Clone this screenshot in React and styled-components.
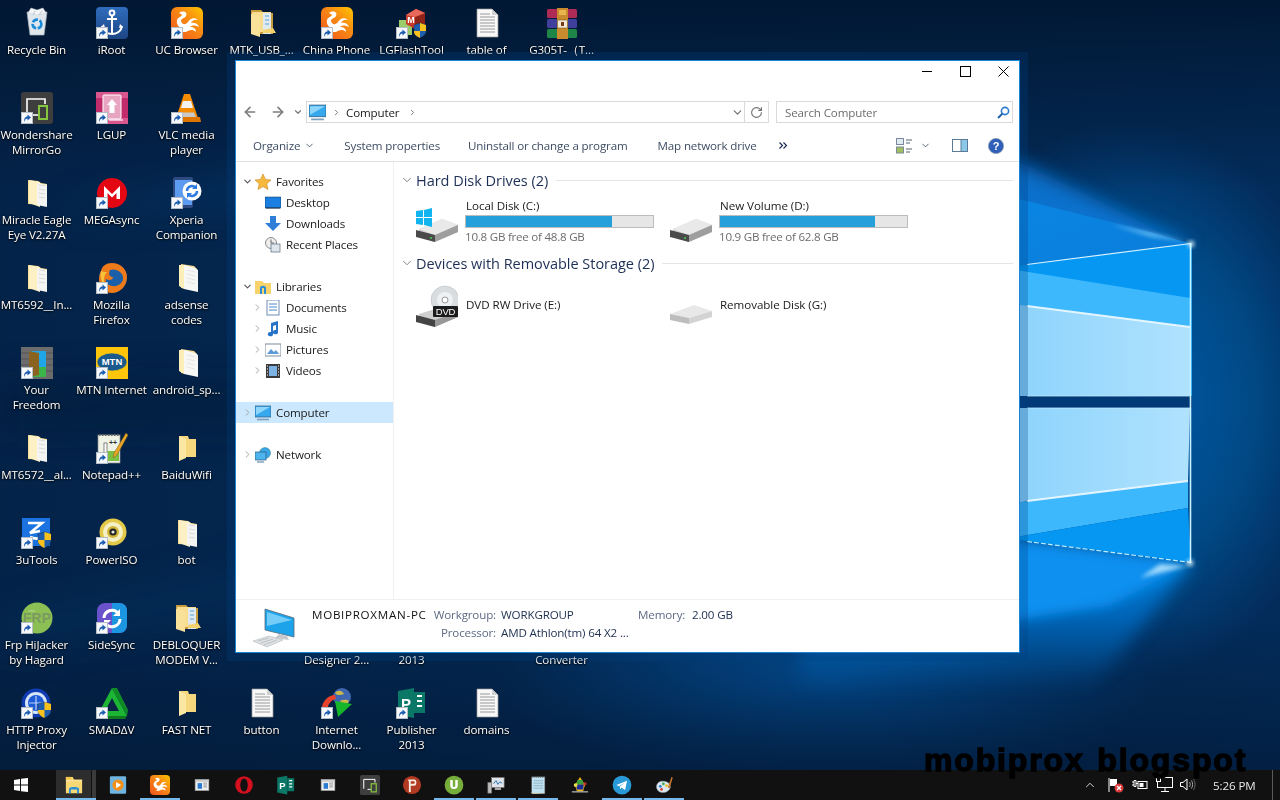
import React from 'react';
import styled, { createGlobalStyle } from 'styled-components';
import { ArrowLeft, ArrowRight, ChevronDown, ChevronRight, RotateCw, ChevronUp } from 'lucide-react';

const UI = '"Open Sans","Noto Sans","Liberation Sans",sans-serif';

const Global = createGlobalStyle`
  html,body{margin:0;padding:0;background:#04244a;overflow:hidden;}
  #root{width:1280px;height:800px;}
  *{box-sizing:border-box;}
`;

const Screen = styled.div`position:relative;width:1280px;height:800px;overflow:hidden;display:flex;flex-direction:column;font-family:${UI};`;
const WallpaperSvg = styled.svg`position:absolute;inset:0;width:1280px;height:800px;`;
const DesktopGrid = styled.div`position:relative;flex:1;display:grid;grid-template-columns:repeat(8,75px);grid-auto-rows:85px;align-content:start;margin-left:-1px;`;
const DeskItem = styled.div`display:flex;flex-direction:column;align-items:center;padding-top:7px;min-width:0;`;
const IconBox = styled.div`position:relative;width:32px;height:32px;flex:none;`;
const IconSvg = styled.svg`display:block;width:${p => p.$s || 32}px;height:${p => p.$s || 32}px;`;
const Badge = styled.svg`position:absolute;left:0;bottom:0;width:12px;height:12px;`;
const DeskLabel = styled.div`margin-top:3px;width:75px;text-align:center;color:#fff;font-size:11.6px;line-height:15.4px;letter-spacing:-.12px;text-shadow:0 1px 2px #000,0 0 2px rgba(0,0,0,.8);white-space:pre-line;`;

const Window = styled.div`position:absolute;left:235px;top:60px;width:785px;height:593px;background:#fff;border:1px solid #1a84d6;box-shadow:0 0 0 8px rgba(0,64,130,.28);display:flex;flex-direction:column;color:#000;font-size:11.6px;letter-spacing:-.15px;`;
const TitleBar = styled.div`height:40px;flex:none;display:flex;justify-content:flex-end;gap:8px;padding-right:1px;`;
const CtrlBtn = styled.div`width:30px;height:20px;display:flex;align-items:center;justify-content:center;`;
const NavRow = styled.div`height:22px;flex:none;display:flex;align-items:center;`;
const NavArrows = styled.div`width:70px;flex:none;display:flex;align-items:center;padding-left:6px;`;
const NavSlot = styled.div`width:${p => p.$w}px;flex:none;display:flex;justify-content:center;align-items:center;color:${p => p.$c || '#7c7c7c'};`;
const AddressBox = styled.div`width:463px;height:22px;border:1px solid #d9d9d9;display:flex;align-items:center;flex:none;color:#1a1a1a;`;
const Crumb = styled.span`margin:0 4px 0 -1px;`;
const CrumbChev = styled.span`display:flex;color:#777;margin:0 6px 0 5px;`;
const Spacer = styled.div`flex:1;`;
const AddrBtn = styled.div`height:100%;width:${p => p.$w}px;display:flex;align-items:center;justify-content:center;color:#707070;border-left:${p => p.$div ? '1px solid #d9d9d9' : '0'};`;
const SearchBox = styled.div`margin-left:7px;width:237px;height:22px;border:1px solid #d9d9d9;display:flex;align-items:center;padding:0 2px 0 8px;color:#6d6d6d;justify-content:space-between;flex:none;`;
const Toolbar = styled.div`height:31px;margin-top:8px;flex:none;border-bottom:1px solid #e3e3e3;display:flex;align-items:center;color:#3d4d63;padding:0 15px 1px 17px;`;
const ToolItem = styled.div`display:flex;align-items:center;gap:4px;margin-left:${p => p.$ml || 0}px;white-space:nowrap;`;
const Body = styled.div`flex:1;display:flex;min-height:0;`;
const Side = styled.div`width:158px;flex:none;border-right:1px solid #f0f0f0;padding-top:9px;display:flex;flex-direction:column;`;
const TreeRow = styled.div`height:21px;flex:none;display:flex;align-items:center;padding-left:${p => 5 + (p.$lvl || 0) * 10}px;margin-top:${p => p.$gap ? 21 : 0}px;background:${p => p.$sel ? '#cce8ff' : 'transparent'};width:157px;color:#1a1a1a;`;
const Exp = styled.div`width:12px;height:12px;flex:none;display:flex;align-items:center;justify-content:center;color:${p => p.$open ? '#555' : '#a0a0a0'};margin-right:2px;`;
const TreeIcon = styled.div`width:16px;height:16px;flex:none;margin-right:5px;`;
const Main = styled.div`flex:1;padding:7px 6px 0 6px;min-width:0;`;
const GroupHead = styled.div`height:22px;display:flex;align-items:center;color:#1e2f55;font-size:14.5px;letter-spacing:-.03px;margin-top:${p => p.$mt || 0}px;`;
const GroupChev = styled.div`width:16px;display:flex;justify-content:flex-start;color:#6b6b6b;`;
const GroupLine = styled.div`flex:1;height:1px;background:#e5e5e5;margin-left:8px;`;
const Tiles = styled.div`display:grid;grid-template-columns:254px 254px;margin:${p => p.$mt || 0}px 0 0 16px;`;
const Tile = styled.div`display:flex;align-items:center;min-height:${p => p.$h || 47}px;`;
const TileIcon = styled.div`width:49px;flex:none;margin-top:${p => p.$mt || 0}px;`;
const TileInfo = styled.div`flex:1;min-width:0;`;
const TileName = styled.div`line-height:15px;color:#1a1a1a;padding-left:1px;letter-spacing:-.05px;margin-top:${p => p.$mt || 0}px;`;
const Bar = styled.div`width:189px;height:13px;margin-top:2px;border:1px solid #bcbcbc;background:#e6e6e6;`;
const BarFill = styled.div`height:100%;background:#26a0da;`;
const TileSub = styled.div`line-height:16px;margin-top:1px;color:#6d6d6d;letter-spacing:-.25px;`;
const Details = styled.div`height:53px;flex:none;border-top:1px solid #f0f0f0;display:flex;padding:7px 0 0 17px;`;
const DetailIcon = styled.div`width:59px;flex:none;`;
const DetailGrid = styled.div`display:grid;grid-template-columns:121px 63px 142px 49px auto;grid-auto-rows:18px;line-height:16px;`;
const DName = styled.div`color:#111;white-space:nowrap;letter-spacing:.72px;`;
const DLabel = styled.div`color:#5e6a85;text-align:${p => p.$left ? 'left' : 'right'};white-space:nowrap;`;
const DValue = styled.div`color:#1e2f4f;padding-left:5px;white-space:nowrap;`;

const Watermark = styled.div`position:absolute;left:924px;top:740px;font-family:"Liberation Sans",sans-serif;font-weight:700;font-size:32px;line-height:40px;letter-spacing:1.85px;color:#000;-webkit-text-stroke:1.4px #000;word-spacing:2px;white-space:nowrap;`;

const Taskbar = styled.div`position:relative;height:30px;flex:none;background:#111;display:flex;align-items:stretch;`;
const StartBtn = styled.div`width:48px;display:flex;align-items:center;justify-content:center;margin-right:8px;padding-right:7px;`;
const TaskBtn = styled.div`position:relative;width:40px;margin-right:2px;display:flex;align-items:center;justify-content:center;padding:2px ${p => p.$act ? 5 : 0}px 0 0;background:${p => p.$act ? 'linear-gradient(90deg,#2d2d2d 0 35px,#111 35px 36px,#3a3a3a 36px)' : 'transparent'};border-bottom:2px solid ${p => p.$on ? '#76b9ed' : 'transparent'};`;
const TraySlot = styled.div`position:absolute;left:${p => p.$x}px;top:${p => p.$y || 7}px;display:flex;`;
const Clock = styled.div`position:absolute;left:1213px;top:8px;line-height:16px;color:#e8e8e8;font-size:11.6px;letter-spacing:-.1px;white-space:nowrap;`;
const ShowDesktop = styled.div`position:absolute;left:1272px;top:0;width:1px;height:30px;background:#5a5a5a;`;

function Wallpaper() {
  return (
    <WallpaperSvg viewBox="0 0 1280 800">
      <defs>
        <linearGradient id="wBase" x1="0" x2="1" y1="0" y2="0">
          <stop offset="0" stopColor="#042349" /><stop offset=".5" stopColor="#032852" /><stop offset=".8" stopColor="#032a56" /><stop offset="1" stopColor="#032c5a" />
        </linearGradient>
        <linearGradient id="wTop" x1="0" x2="0" y1="0" y2="1">
          <stop offset="0" stopColor="#011630" stopOpacity=".9" /><stop offset="1" stopColor="#011630" stopOpacity="0" />
        </linearGradient>
        <linearGradient id="wBot" x1="0" x2="0" y1="0" y2="1">
          <stop offset="0" stopColor="#021834" stopOpacity="0" /><stop offset="1" stopColor="#021834" stopOpacity=".75" />
        </linearGradient>
        <radialGradient id="wGlow"><stop offset="0" stopColor="#005cb0" stopOpacity="1" /><stop offset=".6" stopColor="#00508f" stopOpacity=".8" /><stop offset="1" stopColor="#004a90" stopOpacity="0" /></radialGradient>
        <radialGradient id="wGlow2"><stop offset="0" stopColor="#0358a6" stopOpacity=".85" /><stop offset="1" stopColor="#0358a6" stopOpacity="0" /></radialGradient>
        <linearGradient id="p3" x1="0" x2="1" y1="0" y2="0"><stop offset="0" stopColor="#72c8fb" /><stop offset="1" stopColor="#b0e2fe" /></linearGradient>
        <linearGradient id="upBeam" x1="0" x2="1" y1="0" y2="1"><stop offset="0" stopColor="#0a8aea" /><stop offset="1" stopColor="#0a7cd8" /></linearGradient>
        <linearGradient id="lowBeam" x1="0" x2="0" y1="0" y2="1"><stop offset="0" stopColor="#0090f2" /><stop offset=".5" stopColor="#0068bc" /><stop offset="1" stopColor="#0068bc" stopOpacity="0" /></linearGradient>
        <linearGradient id="topBeam" x1="0" x2="0" y1="0" y2="1"><stop offset="0" stopColor="#0568b8" stopOpacity="0" /><stop offset=".6" stopColor="#0560b0" stopOpacity=".7" /><stop offset="1" stopColor="#0a88e6" /></linearGradient>
        <filter id="b2" x="-50%" y="-50%" width="200%" height="200%"><feGaussianBlur stdDeviation="2" /></filter>
        <filter id="b5" x="-30%" y="-30%" width="160%" height="160%"><feGaussianBlur stdDeviation="6" /></filter>
        <filter id="b8" x="-30%" y="-30%" width="160%" height="160%"><feGaussianBlur stdDeviation="9" /></filter>
        <filter id="b20" x="-30%" y="-50%" width="160%" height="200%"><feGaussianBlur stdDeviation="20" /></filter>
      </defs>
      <rect width="1280" height="800" fill="url(#wBase)" />
      <ellipse cx="1130" cy="400" rx="210" ry="280" fill="url(#wGlow)" />
      <ellipse cx="830" cy="680" rx="330" ry="110" fill="url(#wGlow2)" />
      <rect width="1280" height="190" fill="url(#wTop)" />
      <rect y="620" width="1280" height="180" fill="url(#wBot)" />
      <g filter="url(#b20)" opacity=".55">
        <path d="M0 385 L1000 395 V412 L0 430Z" fill="#011a38" />
        <path d="M40 215 L240 180 L600 130 L600 150 L240 205Z" fill="#0a4a86" opacity=".7" />
        <path d="M0 620 L300 560 L300 590 L0 650Z" fill="#063a70" opacity=".6" />
      </g>
      <path d="M800 110 L1192 244 L800 300Z" fill="url(#topBeam)" filter="url(#b8)" />
      <path d="M880 130 L1027 165 L1170 236 L1192 244 L880 260Z" fill="#0878d8" opacity=".85" filter="url(#b8)" />
      <path d="M800 530 L1192 563 L1090 690 L800 690Z" fill="url(#lowBeam)" filter="url(#b8)" />
      <path d="M880 164 L1027 201 L1150 232 L1192 244 L880 284Z" fill="url(#upBeam)" />
      <path d="M880 522 L1191 563 L1110 606 L880 640Z" fill="#0890f0" filter="url(#b5)" />
      <path d="M880 284 L1192 243 V396 H880Z" fill="#0597f2" />
      <path d="M880 248 L1190 298 V396 H880Z" fill="#3db8fc" />
      <path d="M880 287 L1190 327 V396 H880Z" fill="url(#p3)" />
      <path d="M880 408 H1190 L1188 481 L880 520Z" fill="url(#p3)" />
      <path d="M880 520 L1188 481 V508 L880 560Z" fill="#3db8fc" />
      <path d="M880 523 L1027 541 L1191 562 L1188 508 L880 560Z" fill="#0597f2" />
      <path d="M880 396 H1192 V408 H880Z" fill="#023a78" />
      <path d="M1027 264.5 L1191 243.5" stroke="#d8f4ff" strokeWidth="1.2" fill="none" />
      <path d="M1027 306 L1190 327" stroke="#eefaff" strokeWidth="2.2" fill="none" opacity=".9" />
      <path d="M1027 501 L1188 481" stroke="#f2fbff" strokeWidth="2" fill="none" opacity=".9" />
      <path d="M1027 541.5 L1191 562.5" stroke="#b8ecff" strokeWidth="1.2" strokeDasharray="5 2" fill="none" />
      <path d="M1190.5 244 V563" stroke="#c8f2ff" strokeWidth="1.6" fill="none" />
      <path d="M1027 396 H1190 M1027 408 H1190" stroke="#bfeaff" strokeWidth="1" fill="none" opacity=".8" />
      <path d="M1110 224 L1190 242 L1150 236Z" fill="#a8e4ff" opacity=".8" filter="url(#b2)" />
      <path d="M1140 578 L1188 566 L1160 564Z" fill="#d0f2ff" opacity=".75" filter="url(#b2)" />
      <circle cx="1191" cy="244" r="3" fill="#eaf9ff" filter="url(#b2)" />
      <circle cx="1190" cy="563" r="3" fill="#eaf9ff" filter="url(#b2)" />
    </WallpaperSvg>
  );
}

const Txt = ({ x, y, s, c = '#fff', w = 700, children, a = 'middle', f = 'Liberation Sans' }) => (
  <text x={x} y={y} fontSize={s} fill={c} fontWeight={w} textAnchor={a} fontFamily={f}>{children}</text>
);

const docFolder = (
  <>
    <path d="M7 3 L17 4 L20 6 L26 7 V28 L7 27Z" fill="#f7dc8f" />
    <path d="M8 3 L19 5 V30 L8 26Z" fill="#fdf0c4" />
    <path d="M16 6 L26 8 V30 L16 28Z" fill="#f4f4f2" />
    <path d="M18 8 L24 9 M18 12 L24 13 M18 16 L24 17 M18 20 L24 21" stroke="#d9d9d9" strokeWidth="1" />
  </>
);
const plainDocFolder = (
  <>
    <path d="M10 2 L23 4 L26 7 V28 L10 26Z" fill="#f7dc8f" />
    <path d="M13 3 L24 6 L27 8 V30 L13 27Z" fill="#f7f7f5" />
    <path d="M8 3 L13 3 V27 L8 24Z" fill="#fdeeb8" />
    <path d="M16 8 L24 10 M16 12 L24 14 M16 16 L24 18 M16 20 L24 22" stroke="#e4e4e4" strokeWidth="1" />
  </>
);
const simpleFolder = (
  <>
    <path d="M8 4 H17 L18 7 H25 V25 H12 L8 29Z" fill="#f6d77e" />
    <path d="M8 4 L15 7 V26 L8 29Z" fill="#fbe6a2" />
  </>
);
const richFolder = (
  <>
    <path d="M5 3 H15 L18 6 H27 V27 H5Z" fill="#c99b3f" />
    <path d="M6 5 H25 V25 H6Z" fill="#f8dd91" />
    <path d="M17 6 H25 V27 H17Z" fill="#dfe9ef" />
    <path d="M19 9 H23 M19 13 H23 M19 17 H23" stroke="#5a9fd8" strokeWidth="1.2" />
    <path d="M5 7 L14 9 V30 L5 27Z" fill="#f9e19a" />
    <path d="M27 21 L30 26 H17 L17 23Z" fill="#f4d36f" />
  </>
);
const textDoc = (
  <>
    <path d="M6 2 H21 L27 8 V30 H6Z" fill="#f8f8f8" stroke="#9a9a9a" strokeWidth=".7" />
    <path d="M21 2 V8 H27Z" fill="#d0d0d0" />
    <path d="M9 7 H19 M9 10 H24 M9 13 H24 M9 16 H24 M9 19 H24 M9 22 H24 M9 25 H24" stroke="#8e8e8e" strokeWidth=".9" />
  </>
);
const ucArt = (
  <>
    <rect width="32" height="32" rx="6" fill="url(#ucg)" />
    <defs><linearGradient id="ucg" x1="0" x2="1" y1="1" y2="0"><stop offset="0" stopColor="#f0541e" /><stop offset=".6" stopColor="#f98c12" /><stop offset="1" stopColor="#fdc500" /></linearGradient></defs>
    <path d="M8 6 C12 3 17 5 15 9 C13 12 10 11 10 14 C11 18 15 18 17 15 C19 11 24 10 27 13 C23 12 21 14 20 16 C24 15 27 17 28 20 C24 18 21 18 19 20 C23 20 25 22 25 25 C22 22 18 23 15 25 H9 C11 24 12 23 12 22 C8 21 5 17 6 13 C7 10 10 10 11 8 C11 7 9 7 8 6Z" fill="#fff" />
  </>
);
const wordWin = (
  <>
    <rect x="5" y="7" width="22" height="18" fill="#eee" stroke="#9b9b9b" />
    <rect x="6" y="8" width="20" height="3" fill="#cfcfcf" />
    <rect x="9" y="13" width="7" height="9" fill="#2a7bd0" />
    <path d="M18 13 H24 M18 16 H24 M18 19 H24" stroke="#666" strokeWidth="1" />
  </>
);
const pubArt = (
  <>
    <path d="M2 4 L18 1 V31 L2 28Z" fill="#0b7766" />
    <path d="M18 5 H29 V26 H18Z" fill="#0b7766" />
    <path d="M21 9 H26 M21 14 H26 M21 19 H26" stroke="#fff" strokeWidth="2" />
    <Txt x="10" y="22" s="15">P</Txt>
  </>
);
const mirrorArt = (
  <>
    <rect width="32" height="32" rx="3" fill="#3e3e3e" />
    <path d="M6 22 V7 H24 V12" fill="none" stroke="#fff" strokeWidth="1.6" />
    <rect x="18" y="14" width="8" height="13" fill="none" stroke="#85c441" strokeWidth="2" />
    <path d="M12 23 H17" stroke="#fff" strokeWidth="1.6" />
  </>
);

const art = {
  recycle: (
    <>
      <path d="M6 5 H26 L23 28 H9Z" fill="#dfe6ec" stroke="#a8b4bd" strokeWidth=".7" />
      <path d="M7 6 L10 1 L16 3 L22 1 L25 6 L16 8Z" fill="#f2f5f7" stroke="#c4ccd2" strokeWidth=".5" />
      <path d="M12 8 L14 4 M18 8 L21 4" stroke="#b9c2c9" strokeWidth="1" />
      <circle cx="16" cy="17" r="4.4" fill="none" stroke="#1a8bd8" strokeWidth="2.6" strokeDasharray="6 1.6" />
    </>
  ),
  iroot: (
    <>
      <defs><linearGradient id="irg" x1="0" x2="0" y1="0" y2="1"><stop offset="0" stopColor="#2f6dbd" /><stop offset="1" stopColor="#1d4685" /></linearGradient></defs>
      <rect width="32" height="32" rx="4" fill="url(#irg)" />
      <g fill="none" stroke="#fff" strokeWidth="2">
        <circle cx="16" cy="6" r="2.4" /><path d="M16 8.5 V26 M11 12 H21 M6 19 C7 25 12 27 16 27 C20 27 25 25 26 19" />
      </g>
      <path d="M5 20 L8 17 L9 21Z M27 20 L24 17 L23 21Z" fill="#fff" />
    </>
  ),
  uc: ucArt,
  richFolder,
  docFolder,
  plainDocFolder,
  simpleFolder,
  lgflash: (
    <>
      <path d="M3 13 H16 V28 H3Z" fill="#9ccb6a" />
      <path d="M10 8 L20 2 L29 6 V17 L19 22 L10 17Z" fill="#c83b2c" />
      <path d="M19 10 L29 6 V17 L19 22Z" fill="#8e2418" />
      <path d="M10 8 L20 2 L29 6 L19 10Z" fill="#e8685a" />
      <Txt x="15" y="16" s="9">M</Txt>
      <path d="M18 18 L24 16 L30 18 V25 C30 28 26 30 24 31 C22 30 18 28 18 25Z" fill="#1d5fae" stroke="#223" strokeWidth=".4" />
      <path d="M24 16 L30 18 V24 H24Z M24 24 H18 V25 C18 28 22 30 24 31Z" fill="#f8c11d" />
    </>
  ),
  text: textDoc,
  rar: (
    <>
      <rect x="1" y="2" width="30" height="9" rx="1.5" fill="#b02a56" />
      <rect x="1" y="12" width="30" height="9" rx="1.5" fill="#3f3f9c" />
      <rect x="1" y="22" width="30" height="9" rx="1.5" fill="#1e8447" />
      <rect x="11" y="1" width="11" height="31" fill="#c98b2d" />
      <rect x="11.5" y="13" width="10" height="8" fill="#f2e9d8" stroke="#7a5518" strokeWidth=".6" />
      <path d="M13 3 H20 V8 H13Z" fill="#e8b64c" />
      <rect x="15" y="15" width="3" height="4" fill="#7a3a10" />
    </>
  ),
  mirror: mirrorArt,
  lgup: (
    <>
      <rect width="32" height="32" fill="#c22c6b" />
      <path d="M0 0 H32 V6 H0Z M0 26 H32 V32 H0Z" fill="#d9568e" />
      <rect x="7" y="3" width="18" height="24" rx="1" fill="#e7a5c2" stroke="#fff" strokeWidth="1" />
      <path d="M16 7 L21 13 H18.5 V21 H13.5 V13 H11Z" fill="#fff" />
      <path d="M13 28 H27" stroke="#fff" strokeWidth="1.2" />
    </>
  ),
  vlc: (
    <>
      <path d="M13 2 H19 L27 26 H5Z" fill="#f48b00" />
      <path d="M12 9 L20 9 L22 16 L10 16Z" fill="#f2f2f2" />
      <path d="M8.5 20.5 L23 20.5 L25 25 L7 25Z" fill="#c9c9c9" />
      <path d="M3 25 H29 L30 30 H2Z" fill="#e07400" />
    </>
  ),
  mega: (
    <>
      <circle cx="16" cy="16" r="15" fill="#e30613" />
      <path d="M8 22 V9 L16 17 L24 9 V22 H20.5 V16 L16 20.5 L11.5 16 V22Z" fill="#fff" />
    </>
  ),
  xperia: (
    <>
      <rect x="2" y="0" width="20" height="31" rx="2" fill="#2f4a80" />
      <rect x="4" y="3" width="17" height="25" fill="#5c9bf0" />
      <circle cx="21" cy="14" r="9.5" fill="#fff" />
      <path d="M16 14 A5 5 0 0 1 25 11 M26 14 A5 5 0 0 1 17 17" fill="none" stroke="#2e7be0" strokeWidth="2.4" />
      <path d="M26 7 V12 H21Z M16 21 V16 H21Z" fill="#2e7be0" />
    </>
  ),
  firefox: (
    <>
      <circle cx="17" cy="16" r="14" fill="#1c4f96" />
      <path d="M5 9 C6 4 10 1 16 1 C24 1 31 7 31 15 C31 24 24 31 16 31 C9 31 3 25 3 17 C3 14 4 11 5 9Z" fill="#ee7a1a" />
      <path d="M14 8 C20 6 27 10 27 16 C27 21 22 25 16 24 C11 23 9 20 10 17 C13 19 17 18 17 15 C14 15 12 13 14 8Z" fill="#1b5fa8" />
      <path d="M5 9 C4 14 5 20 9 24 C7 18 8 13 11 10 C9 10 7 10 5 9Z" fill="#f7c13a" />
    </>
  ),
  freedom: (
    <>
      <rect width="32" height="32" fill="#6c6c6c" />
      <path d="M0 6 H32 M0 12 H8 M24 12 H32 M0 18 H8 M24 18 H32 M0 24 H8 M24 24 H32" stroke="#4e4e4e" strokeWidth=".8" />
      <rect x="8" y="4" width="17" height="26" fill="#20a6e8" />
      <rect x="8" y="20" width="17" height="10" fill="#3bb54a" />
      <path d="M8 4 L18 6 V28 L8 30Z" fill="#8a6321" />
    </>
  ),
  mtn: (
    <>
      <rect width="32" height="32" fill="#fdc60a" />
      <ellipse cx="16" cy="15" rx="15" ry="9" fill="#1a5a8c" />
      <ellipse cx="16" cy="15" rx="15" ry="9" fill="none" stroke="#fdc60a" strokeWidth=".6" />
      <Txt x="16" y="18" s="9.5">MTN</Txt>
    </>
  ),
  notepad: (
    <>
      <rect x="2" y="3" width="22" height="28" fill="#eef3e6" stroke="#8a8a8a" strokeWidth=".7" />
      <path d="M3 3 H24" stroke="#666" strokeWidth="2" strokeDasharray="1.5 1.5" />
      <rect x="8" y="11" width="3" height="15" fill="#fff" stroke="#555" strokeWidth=".7" />
      <rect x="11" y="19" width="12" height="10" fill="#7ac143" />
      <Txt x="17" y="13" s="7" c="#333">++</Txt>
      <path d="M30 1 L32 3 L21 23 L17 26 L18 21Z" fill="#e8a628" stroke="#7a5a10" strokeWidth=".5" />
    </>
  ),
  utools: (
    <>
      <rect x="1" y="1" width="28" height="28" fill="#1a73e0" />
      <path d="M7 6 H21 L9 16 L19 14 M9 20 C13 22 18 22 22 20" fill="none" stroke="#fff" strokeWidth="2.6" />
      <path d="M17 17 L23.5 15 L30 17 V24 C30 27 26 30 23.5 31 C21 30 17 27 17 24Z" fill="#1d5fae" stroke="#223" strokeWidth=".4" />
      <path d="M23.5 15 L30 17 V23 H23.5Z M23.5 23 H17 V24 C17 27 21 30 23.5 31Z" fill="#f8c11d" />
    </>
  ),
  poweriso: (
    <>
      <circle cx="17" cy="15" r="13.5" fill="#e3c948" />
      <circle cx="17" cy="15" r="10" fill="#f4efc4" />
      <circle cx="17" cy="15" r="6" fill="#cfb53a" />
      <circle cx="17" cy="15" r="3.6" fill="#222" />
      <circle cx="17" cy="15" r="1.6" fill="#e7e7e7" />
    </>
  ),
  frp: (
    <>
      <circle cx="16" cy="16" r="15.5" fill="#8cbf54" />
      <Txt x="16" y="21" s="14" c="#7b9a60">FRP</Txt>
      <path d="M8 9 H14" stroke="#b8d993" strokeWidth="1" />
    </>
  ),
  sidesync: (
    <>
      <rect x="1" y="1" width="30" height="30" rx="8" fill="#6a52cc" />
      <path d="M16 1 H23 C28 1 31 4 31 9 V23 C31 28 28 31 23 31 H16Z" fill="#1c96e0" />
      <path d="M8 16 A8 8 0 0 1 22 11 M24 17 A8 8 0 0 1 10 22" fill="none" stroke="#fff" strokeWidth="3" />
      <path d="M24 7 V14 H17Z M8 25 V18 H15Z" fill="#fff" />
    </>
  ),
  proxy: (
    <>
      <circle cx="15" cy="16" r="14.5" fill="#0f3cb0" />
      <circle cx="15" cy="16" r="11" fill="#d7e5f8" />
      <circle cx="15" cy="16" r="8" fill="#1d5bd8" />
      <path d="M8 16 H22 M15 9 V23" stroke="#bcd3f5" strokeWidth="1.2" />
      <path d="M17 17 L23.5 15 L30 17 V24 C30 27 26 30 23.5 31 C21 30 17 27 17 24Z" fill="#1d5fae" stroke="#223" strokeWidth=".4" />
      <path d="M23.5 15 L30 17 V23 H23.5Z M23.5 23 H17 V24 C17 27 21 30 23.5 31Z" fill="#f8c11d" />
    </>
  ),
  smad: (
    <>
      <path d="M16 1 L31 29 H1Z" fill="#1db534" />
      <path d="M16 11 L23 24 H9Z" fill="#0b2445" />
      <path d="M16 1 L21 1 L32 23 L31 29Z" fill="#0f8c26" />
      <path d="M1 29 H31 L29 32 H4Z" fill="#0f7a20" />
    </>
  ),
  idm: (
    <>
      <circle cx="21" cy="10" r="9" fill="#3f66b0" />
      <path d="M14 6 C17 2 22 4 23 7 C20 8 16 9 14 6Z M19 14 C23 12 27 13 28 14 C26 18 22 19 19 14Z" fill="#c8b94a" />
      <path d="M1 20 C2 13 8 8 14 8 L15 12 C10 13 7 17 7 21Z" fill="#e8432a" />
      <path d="M1 20 C1 23 3 26 6 27 L8 22 L7 20Z" fill="#f4c21d" />
      <path d="M14 14 L31 17 L17 30Z" fill="#16b52a" />
    </>
  ),
  pubBig: pubArt,
  explorerTb: (
    <>
      <path d="M3 3 H14 L16 7 H29 V29 H3Z" fill="#f8d775" />
      <path d="M3 3 H12 V7 H3Z" fill="#f3c64c" />
      <path d="M8 22 C8 18 24 18 24 22 V29 H21 V23 H11 V29 H8Z" fill="#2a8fd8" />
      <path d="M3 9 H29" stroke="#fbe7ab" strokeWidth="1.4" />
    </>
  ),
  mediaTb: (
    <>
      <rect x="3" y="2" width="26" height="28" rx="2" fill="#6fb4e0" />
      <circle cx="16" cy="16" r="9" fill="#f39019" />
      <path d="M13 11 L21 16 L13 21Z" fill="#fff" />
    </>
  ),
  winTb: wordWin,
  operaTb: (
    <>
      <circle cx="16" cy="16" r="14" fill="#d4101f" />
      <ellipse cx="16" cy="16" rx="6" ry="10.5" fill="#111" />
    </>
  ),
  psiTb: (
    <>
      <circle cx="16" cy="16" r="14.5" fill="#b03a22" />
      <path d="M10 7 H20 C24 7 24 17 20 17 H14 V27 H11 V10 H10Z M14 10 V14 H19 C21 14 21 10 19 10Z" fill="#f6e9de" />
    </>
  ),
  utorrentTb: (
    <>
      <circle cx="16" cy="16" r="15" fill="#76ad3b" />
      <path d="M10 8 V17 C10 24 22 24 22 17 V8 H18 V17 C18 20 14 20 14 17 V8Z" fill="#fff" />
    </>
  ),
  monitorTb: (
    <>
      <rect x="9" y="4" width="20" height="16" fill="#e0e4e8" stroke="#777" />
      <path d="M12 14 L16 9 L19 15 L22 11 L26 13" fill="none" stroke="#1f6fb2" strokeWidth="1.4" />
      <rect x="3" y="12" width="6" height="17" fill="#bcbcbc" stroke="#777" />
      <path d="M14 20 H24 V24 H14Z" fill="#a8a8a8" />
    </>
  ),
  notesTb: (
    <>
      <rect x="6" y="3" width="21" height="27" fill="#bfe2f0" stroke="#6a6a6a" strokeWidth=".8" />
      <path d="M7 3 H26" stroke="#444" strokeWidth="2" strokeDasharray="1.5 1.5" />
      <path d="M9 9 H24 M9 13 H24 M9 17 H24 M9 21 H24" stroke="#7e9fae" />
      <path d="M4 28 L27 30 H8Z" fill="#dfd0a8" />
    </>
  ),
  colorTb: (
    <>
      <path d="M16 3 L24 16 L21 26 H11 L8 16Z" fill="#e8b41a" />
      <path d="M12 8 L20 8 L22 15 H10Z" fill="#3aa03a" />
      <path d="M10 15 H22 L21 23 H11Z" fill="#1b2a9a" />
      <circle cx="9" cy="16" r="3" fill="#e8e04a" /><circle cx="24" cy="14" r="2.5" fill="#c8322a" />
      <path d="M3 27 H29" stroke="#ddd" strokeWidth="1.6" />
    </>
  ),
  tgTb: (
    <>
      <circle cx="16" cy="16" r="15" fill="#2a9ad6" />
      <path d="M7 16 L24 9 L21 24 L15 20 L13 23 L12.5 18.5 L21 12 L11 17.8Z" fill="#fff" />
    </>
  ),
  paintTb: (
    <>
      <path d="M4 19 C4 12 10 9 16 10 C23 11 27 15 26 20 C25 25 19 29 12 28 C7 27 4 23 4 19Z" fill="#dbe6ee" stroke="#8ca0b0" strokeWidth=".7" />
      <circle cx="10" cy="18" r="2.2" fill="#2d7fd0" /><circle cx="15" cy="14" r="2.2" fill="#37a74a" /><circle cx="20" cy="17" r="2.2" fill="#e8c22a" /><circle cx="12" cy="23" r="2.2" fill="#d9432a" />
      <path d="M22 20 L28 3 L30 4 L25 21Z" fill="#c9772a" />
    </>
  ),
};

const Art = ({ name, s = 32 }) => <IconSvg $s={s} viewBox="0 0 32 32">{art[name]}</IconSvg>;

const ShortcutBadge = () => (
  <Badge viewBox="0 0 12 12">
    <rect x=".5" y=".5" width="11" height="11" fill="#f6f8fb" stroke="#b4bcc6" />
    <path d="M3 10 C3 6 4.5 4.5 6.5 4.5 V2.5 L10 5.5 L6.5 8.5 V6.5 C5 6.5 4 7.5 3 10Z" fill="#1c5cb0" />
  </Badge>
);

const rows = [
  [['Recycle Bin', 'recycle'], ['iRoot', 'iroot', 1], ['UC Browser', 'uc', 1], ['MTK_USB_...', 'richFolder'], ['China Phone', 'uc', 1], ['LGFlashTool', 'lgflash', 1], ['table of', 'text'], ['G305T-（T...', 'rar']],
  [['Wondershare\nMirrorGo', 'mirror', 1], ['LGUP', 'lgup', 1], ['VLC media\nplayer', 'vlc', 1], null, null, null, null, null],
  [['Miracle Eagle\nEye V2.27A', 'docFolder'], ['MEGAsync', 'mega', 1], ['Xperia\nCompanion', 'xperia', 1], null, null, null, null, null],
  [['MT6592__In...', 'docFolder'], ['Mozilla\nFirefox', 'firefox', 1], ['adsense\ncodes', 'plainDocFolder'], null, null, null, null, null],
  [['Your\nFreedom', 'freedom', 1], ['MTN Internet', 'mtn', 1], ['android_sp...', 'plainDocFolder'], null, null, null, null, null],
  [['MT6572__al...', 'docFolder'], ['Notepad++', 'notepad', 1], ['BaiduWifi', 'simpleFolder'], null, null, null, null, null],
  [['3uTools', 'utools', 1], ['PowerISO', 'poweriso', 1], ['bot', 'docFolder'], null, null, null, null, null],
  [['Frp HiJacker\nby Hagard', 'frp', 1], ['SideSync', 'sidesync', 1], ['DEBLOQUER\nMODEM V...', 'richFolder'], null, ['Advanced\nDesigner 2...', 'text'], ['Office\n2013', 'text'], null, ['Video\nConverter', 'text']],
  [['HTTP Proxy\nInjector', 'proxy', 1], ['SMADΔV', 'smad', 1], ['FAST NET', 'simpleFolder'], ['button', 'text'], ['Internet\nDownlo...', 'idm', 1], ['Publisher\n2013', 'pubBig', 1], ['domains', 'text'], null],
];

const taskItems = [
  ['explorerTb', 1, 1], ['mediaTb', 0], ['uc', 1], ['winTb', 0], ['operaTb', 0], ['pubBig', 0], ['winTb', 0], ['mirror', 0], ['psiTb', 0],
  ['utorrentTb', 1], ['monitorTb', 1], ['notesTb', 1], ['colorTb', 0], ['tgTb', 1], ['paintTb', 1],
];

const HDD = ({ win }) => (
  <IconSvg $s={42} viewBox="0 0 42 34">
    <path d="M3 21 L26 11 L42 17 V24 L18 34 L3 29Z" fill="#d3d3d3" />
    <path d="M3 21 L26 11 L42 17 L19 27Z" fill="#e9e9e9" />
    <path d="M0 22 L19 27 V34 L0 29Z" fill="#4a4a4a" />
    <path d="M19 27 L42 17 V24 L19 34Z" fill="#9e9e9e" />
    <circle cx="15" cy="30" r="1" fill="#47d04f" />
    {win && <path d="M0 3 L7 2 V9 H0Z M8 2 L16 0 V9 H8Z M0 10 H7 V17 L0 16Z M8 10 H16 V19 L8 17Z" fill="#11b4ee" />}
  </IconSvg>
);
const DVD = () => (
  <IconSvg $s={42} viewBox="0 0 42 42">
    <circle cx="29" cy="15" r="14" fill="#d9dde0" stroke="#aab" strokeWidth=".4" />
    <circle cx="29" cy="15" r="8" fill="#eef1f3" />
    <circle cx="29" cy="15" r="3" fill="#fff" stroke="#999" />
    <path d="M3 29 L25 22 L42 27 V32 L18 42 L3 37Z" fill="#cfcfcf" />
    <path d="M0 30 L19 35 V42 L0 37Z" fill="#444" />
    <path d="M19 35 L42 27 V32 L19 42Z" fill="#989898" />
    <rect x="17" y="21" width="25" height="11" rx="1" fill="#1c1c1c" />
    <Txt x="29.5" y="30" s="9.5" w={400}>DVD</Txt>
  </IconSvg>
);
const Removable = () => (
  <IconSvg $s={42} viewBox="0 0 42 20">
    <path d="M0 11 L24 2 L42 8 L19 15Z" fill="#e8e8e8" />
    <path d="M0 11 L19 15 V21 L0 17Z" fill="#bdbdbd" />
    <path d="M19 15 L42 8 V14 L19 21Z" fill="#d3d3d3" />
  </IconSvg>
);
const PcBig = () => (
  <IconSvg $s={42} viewBox="0 0 42 40">
    <path d="M12 1 L41 10 V29 L12 22Z" fill="#1ca3ea" stroke="#5a6a78" strokeWidth=".8" />
    <path d="M14 4 L39 12 L14 18Z" fill="#74cdf8" />
    <path d="M26 26 L34 28 L36 32 L22 30Z" fill="#c4c8cc" />
    <path d="M0 33 L16 28 L30 32 L14 39Z" fill="#dfe2e4" stroke="#b4b8bc" strokeWidth=".6" />
    <path d="M5 33 L16 30 M8 35 L20 31 M11 37 L24 32" stroke="#b5b9bd" strokeWidth=".8" />
  </IconSvg>
);

const tree = {
  star: <path d="M8 0 L10.5 5.4 L16 6 L11.8 9.8 L13 15.5 L8 12.6 L3 15.5 L4.2 9.8 L0 6 L5.5 5.4Z" fill="#f6b93e" stroke="#c98720" strokeWidth=".6" />,
  desktop: <><rect x="0" y="2" width="16" height="11" fill="#1a7fe0" stroke="#135" strokeWidth=".5" /><path d="M1 13 H15" stroke="#234" /></>,
  down: <path d="M5 0 H11 V7 H16 L8 15 L0 7 H5Z" fill="#2f7fd8" />,
  recent: <><circle cx="6" cy="6" r="5.5" fill="#eee" stroke="#8a8a8a" /><path d="M6 2.5 V6 H9" stroke="#666" fill="none" /><rect x="6" y="7" width="9" height="8" fill="#dfe6ee" stroke="#6a7a8a" strokeWidth=".8" /></>,
  lib: <><path d="M0 2 H7 L9 4 H16 V15 H0Z" fill="#f7d36a" /><path d="M5 15 V9 C5 6 11 6 11 9 V15 H9 V9 H7 V15Z" fill="#2a8fd8" /></>,
  doc: <><rect x="2" y="0" width="12" height="15" fill="#fff" stroke="#6f8cb4" /><path d="M4 4 H12 M4 7 H12 M4 10 H12" stroke="#4a86c8" /></>,
  music: <path d="M6 2 L13 0 V11 A2.6 2.2 0 1 1 11 9 V4 L8 5 V13 A2.6 2.2 0 1 1 6 11Z" fill="#2673c8" />,
  pic: <><rect x="0" y="2" width="16" height="12" fill="#fff" stroke="#7a8a9a" /><path d="M2 12 L6 7 L9 10 L11 8 L14 12Z" fill="#5a9ad8" /></>,
  video: <><rect x="1" y="1" width="14" height="14" fill="#3a3a3a" /><rect x="4" y="3" width="8" height="10" fill="#7cb3e4" /><path d="M2 3 H3 M2 6 H3 M2 9 H3 M2 12 H3 M13 3 H14 M13 6 H14 M13 9 H14 M13 12 H14" stroke="#fff" /></>,
  pc: <><rect x="0" y="1" width="16" height="11" fill="#36a9ee" stroke="#2b5a80" strokeWidth=".7" /><path d="M1 2 H15 L1 10Z" fill="#8ed6fb" /><path d="M2 14.5 H14" stroke="#7d9fba" strokeWidth="1.6" /></>,
  net: <><circle cx="10" cy="6" r="5.5" fill="#3aa8e8" stroke="#266" strokeWidth=".4" /><rect x="0" y="5" width="11" height="8" fill="#4db4ee" stroke="#2b5a80" strokeWidth=".7" /><path d="M2 15 H9" stroke="#7d9fba" strokeWidth="1.4" /></>,
};
const TI = ({ n }) => <TreeIcon><IconSvg $s={16} viewBox="0 0 16 16">{tree[n]}</IconSvg></TreeIcon>;

const treeRows = [
  { t: 'Favorites', i: 'star', open: 1 },
  { t: 'Desktop', i: 'desktop', lvl: 1 },
  { t: 'Downloads', i: 'down', lvl: 1 },
  { t: 'Recent Places', i: 'recent', lvl: 1 },
  { t: 'Libraries', i: 'lib', open: 1, gap: 1 },
  { t: 'Documents', i: 'doc', lvl: 1, closed: 1 },
  { t: 'Music', i: 'music', lvl: 1, closed: 1 },
  { t: 'Pictures', i: 'pic', lvl: 1, closed: 1 },
  { t: 'Videos', i: 'video', lvl: 1, closed: 1 },
  { t: 'Computer', i: 'pc', closed: 1, gap: 1, sel: 1 },
  { t: 'Network', i: 'net', closed: 1, gap: 1 },
];

const drives = [
  { name: 'Local Disk (C:)', free: 10.8, total: 48.8, win: true },
  { name: 'New Volume (D:)', free: 10.9, total: 62.8 },
];

function Explorer() {
  return (
    <Window>
      <TitleBar>
        <CtrlBtn><svg width="11" height="11" viewBox="0 0 11 11"><path d="M0 5.5 H10" stroke="#000" /></svg></CtrlBtn>
        <CtrlBtn><svg width="11" height="11" viewBox="0 0 11 11"><rect x=".5" y=".5" width="10" height="10" fill="none" stroke="#000" /></svg></CtrlBtn>
        <CtrlBtn><svg width="11" height="11" viewBox="0 0 11 11"><path d="M.5 .5 L10.5 10.5 M10.5 .5 L.5 10.5" stroke="#000" /></svg></CtrlBtn>
      </TitleBar>
      <NavRow>
        <NavArrows>
          <NavSlot $w={16}><ArrowLeft size={16} strokeWidth={2.4} /></NavSlot>
          <NavSlot $w={12} />
          <NavSlot $w={16}><ArrowRight size={16} strokeWidth={2.4} /></NavSlot>
          <NavSlot $w={7} />
          <NavSlot $w={10}><ChevronDown size={10} strokeWidth={3} /></NavSlot>
        </NavArrows>
        <AddressBox>
          <NavSlot $w={20}><IconSvg $s={17} viewBox="0 0 16 16">{tree.pc}</IconSvg></NavSlot>
          <CrumbChev><ChevronRight size={9} strokeWidth={2.5} /></CrumbChev>
          <Crumb>Computer</Crumb>
          <CrumbChev><ChevronRight size={9} strokeWidth={2.5} /></CrumbChev>
          <Spacer />
          <AddrBtn $w={13}><ChevronDown size={13} strokeWidth={2.2} /></AddrBtn>
          <AddrBtn $w={24} $div><RotateCw size={13} strokeWidth={2} /></AddrBtn>
        </AddressBox>
        <SearchBox>
          <span>Search Computer</span>
          <svg width="13" height="13" viewBox="0 0 13 13"><circle cx="8" cy="5" r="3.6" fill="none" stroke="#2a7ad0" strokeWidth="1.6" /><path d="M5.4 7.6 L1 12" stroke="#1d5fa8" strokeWidth="2" /></svg>
        </SearchBox>
      </NavRow>
      <Toolbar>
        <ToolItem>Organize <ChevronDown size={11} strokeWidth={1.8} /></ToolItem>
        <ToolItem $ml={29}>System properties</ToolItem>
        <ToolItem $ml={28}>Uninstall or change a program</ToolItem>
        <ToolItem $ml={30}>Map network drive</ToolItem>
        <ToolItem $ml={22}><svg width="9" height="7" viewBox="0 0 9 7"><path d="M.5 .5 L3.5 3.5 L.5 6.5 M4.5 .5 L7.5 3.5 L4.5 6.5" fill="none" stroke="#1e2f55" strokeWidth="1.2" /></svg></ToolItem>
        <Spacer />
        <ToolItem>
          <svg width="17" height="16" viewBox="0 0 17 16"><rect x=".5" y=".5" width="7" height="6" fill="#dfeaf3" stroke="#7a8a9a" /><rect x=".5" y="9" width="7" height="6" fill="#a0c060" stroke="#7a8a9a" /><path d="M10 2 H16 M10 5 H14 M10 11 H16 M10 14 H14" stroke="#506070" /></svg>
        </ToolItem>
        <ToolItem $ml={7}><ChevronDown size={11} strokeWidth={1.8} /></ToolItem>
        <ToolItem $ml={21}>
          <svg width="16" height="13" viewBox="0 0 16 13"><rect x=".5" y=".5" width="15" height="12" fill="#fff" stroke="#5b7a98" /><rect x="9" y="1" width="6" height="11" fill="#8cc8e8" /><path d="M9 1 V12" stroke="#5b7a98" /></svg>
        </ToolItem>
        <ToolItem $ml={20}>
          <svg width="16" height="16" viewBox="0 0 16 16"><circle cx="8" cy="8" r="7.6" fill="#2f5fb8" stroke="#8a9ab0" strokeWidth=".8" /><Txt x="8" y="12" s="11">?</Txt></svg>
        </ToolItem>
      </Toolbar>
      <Body>
        <Side>
          {treeRows.map(r => (
            <TreeRow key={r.t} $lvl={r.lvl} $gap={r.gap} $sel={r.sel}>
              <Exp $open={r.open}>
                {r.open && <ChevronDown size={11} strokeWidth={2.4} />}
                {r.closed && <ChevronRight size={11} strokeWidth={2} />}
              </Exp>
              <TI n={r.i} />
              {r.t}
            </TreeRow>
          ))}
        </Side>
        <Main>
          <GroupHead>
            <GroupChev><ChevronDown size={14} strokeWidth={1.4} /></GroupChev>Hard Disk Drives (2)<GroupLine />
          </GroupHead>
          <Tiles $mt={6}>
            {drives.map(d => (
              <Tile key={d.name}>
                <TileIcon $mt={7}><HDD win={d.win} /></TileIcon>
                <TileInfo>
                  <TileName>{d.name}</TileName>
                  <Bar><BarFill style={{ width: `${((d.total - d.free) / d.total) * 100}%` }} /></Bar>
                  <TileSub>{d.free} GB free of {d.total} GB</TileSub>
                </TileInfo>
              </Tile>
            ))}
          </Tiles>
          <GroupHead $mt={6}>
            <GroupChev><ChevronDown size={14} strokeWidth={1.4} /></GroupChev>Devices with Removable Storage (2)<GroupLine />
          </GroupHead>
          <Tiles $mt={4}>
            <Tile $h={43}><TileIcon><DVD /></TileIcon><TileInfo><TileName $mt={-3}>DVD RW Drive (E:)</TileName></TileInfo></Tile>
            <Tile $h={43}><TileIcon $mt={14}><Removable /></TileIcon><TileInfo><TileName $mt={-3}>Removable Disk (G:)</TileName></TileInfo></Tile>
          </Tiles>
        </Main>
      </Body>
      <Details>
        <DetailIcon><PcBig /></DetailIcon>
        <DetailGrid>
          <DName>MOBIPROXMAN-PC</DName>
          <DLabel>Workgroup:</DLabel>
          <DValue>WORKGROUP</DValue>
          <DLabel $left>Memory:</DLabel>
          <DValue>2.00 GB</DValue>
          <div />
          <DLabel>Processor:</DLabel>
          <DValue>AMD Athlon(tm) 64 X2 ...</DValue>
        </DetailGrid>
      </Details>
    </Window>
  );
}

function Bar2() {
  return (
    <Taskbar>
      <StartBtn>
        <svg width="14" height="14" viewBox="0 0 14 14"><path d="M0 2 L6 1 V6.5 H0Z M7 .8 L14 0 V6.5 H7Z M0 7.5 H6 V13 L0 12Z M7 7.5 H14 V14 L7 13.2Z" fill="#fff" /></svg>
      </StartBtn>
      {taskItems.map(([n, on, act], i) => (
        <TaskBtn key={i} $on={on} $act={act}><Art name={n} s={20} /></TaskBtn>
      ))}
      <TraySlot $x={1083} $y={8}><ChevronUp size={14} color="#fff" strokeWidth={1.4} /></TraySlot>
      <TraySlot $x={1108} $y={8}>
        <svg width="16" height="15" viewBox="0 0 16 15"><path d="M1 0 V14" stroke="#fff" /><path d="M2 1 H9 V8 H2Z" fill="#fff" /><circle cx="11" cy="10" r="4.5" fill="#d83a3a" /><path d="M9 8 L13 12 M13 8 L9 12" stroke="#fff" strokeWidth="1.3" /></svg>
      </TraySlot>
      <TraySlot $x={1132} $y={9}>
        <svg width="16" height="12" viewBox="0 0 16 12"><path d="M0 3 H2 M0 6 H2 M2 1.5 H4 V7.5 H2Z M4 4.5 H6" stroke="#fff" fill="none" /><rect x="6" y="2.5" width="9" height="7" fill="none" stroke="#fff" /><rect x="7.5" y="4" width="4" height="4" fill="#fff" /></svg>
      </TraySlot>
      <TraySlot $x={1156} $y={7}>
        <svg width="17" height="16" viewBox="0 0 17 16"><rect x="1.5" y=".5" width="15" height="10" fill="none" stroke="#fff" /><rect x=".5" y=".5" width="4" height="4" fill="#111" stroke="#fff" /><path d="M9 11 V14 M5 14.5 H13" stroke="#fff" /></svg>
      </TraySlot>
      <TraySlot $x={1180} $y={8}>
        <svg width="16" height="13" viewBox="0 0 16 13"><path d="M.5 4.5 H3 L7 1 V12 L3 8.5 H.5Z" fill="none" stroke="#fff" /><path d="M9.5 4 C10.5 5.5 10.5 7.5 9.5 9 M11.5 2.5 C13 5 13 8 11.5 10.5" fill="none" stroke="#aaa" /><path d="M13.5 1 C15.5 4.5 15.5 8.5 13.5 12" fill="none" stroke="#666" /></svg>
      </TraySlot>
      <Clock>5:26 PM</Clock>
      <ShowDesktop />
    </Taskbar>
  );
}

export default function App() {
  return (
    <Screen>
      <Global />
      <Wallpaper />
      <DesktopGrid>
        {rows.flat().map((c, i) => (
          <DeskItem key={i}>
            {c ? (
              <>
                <IconBox><Art name={c[1]} />{c[2] ? <ShortcutBadge /> : null}</IconBox>
                <DeskLabel>{c[0]}</DeskLabel>
              </>
            ) : null}
          </DeskItem>
        ))}
      </DesktopGrid>
      <Explorer />
      <Bar2 />
      <Watermark>mobiprox blogspot</Watermark>
    </Screen>
  );
}
